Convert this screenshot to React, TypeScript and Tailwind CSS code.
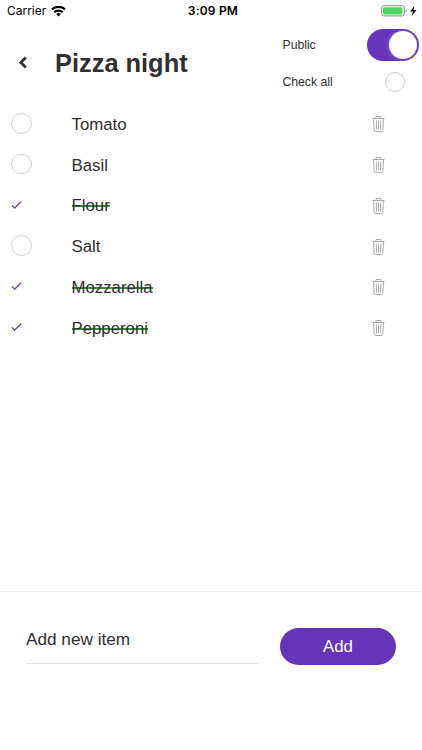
import React, { useState } from 'react';

type Item = {
    name: string;
    checked: boolean;
}

const initialItems: Item[] = [
    { name: 'Tomato', checked: false },
    { name: 'Basil', checked: false },
    { name: 'Flour', checked: true },
    { name: 'Salt', checked: false },
    { name: 'Mozzarella', checked: true },
    { name: 'Pepperoni', checked: true },
];

function StatusBar() {
    return (
        <div className="grid h-[22px] grid-cols-3 items-center pl-[7px] pr-[5px] font-['Inter',sans-serif] text-[12px] leading-[22px] text-black">
            <div className="flex items-center gap-[5px]">
                <span className="tracking-[-0.02px]">Carrier</span>
                <svg className="h-[11px] w-[15px]" viewBox="0 0 15 11" fill="none" stroke="#000" strokeWidth="2.2">
                    <path d="M.9 3.5a9.4 9.4 0 0 1 13.2 0" />
                    <path d="M3.3 6.3a6 6 0 0 1 8.4 0" />
                    <path d="M7.5 10.4 5.1 8.1a3.5 3.5 0 0 1 4.8 0z" fill="#000" stroke="none" />
                </svg>
            </div>
            <span className="pl-[2px] text-center font-semibold tracking-[0.2px]">3:09 PM</span>
            <div className="flex justify-end">
                <svg className="h-[12px] w-[36px]" viewBox="0 0 36 12">
                    <rect x=".6" y=".7" width="22.8" height="10.2" rx="2.2" fill="none" stroke="#8e8e8e" />
                    <rect x="2" y="2.2" width="19.4" height="7.2" rx=".8" fill="#4cd964" />
                    <path d="M24.6 4.2q1 .5 1 1.7t-1 1.7z" fill="#8e8e8e" />
                    <path d="M33.3 1 29.2 6.500h2.7l-1.2 4.5 4.8-5.9h-2.900z" fill="#000" />
                </svg>
            </div>
        </div>
    )
}

function TrashIcon() {
    return (
        <svg className="h-[17px] w-[13px]" viewBox="0 0 13 17" fill="none" stroke="#a9a9a9">
            <path d="M.5 3.500h12M4 3.500V1.500h5v2M1.500 3.500l.7 12q.1 1 1 1h6.600q.9 0 1-1l.7-12M4.300 5.500l.2 9M6.500 5.500v9M8.700 5.500l-.2 9" />
        </svg>
    )
}

function ListItem({ item, toggle, remove }: { item: Item; toggle(): void; remove(): void }) {
    return (
        <li className="flex h-[40.75px] items-center pl-[11px] pr-[37px]">
            <button onClick={toggle} aria-label={item.name} className="flex w-[60.5px] items-center">
                {item.checked ? (
                    <svg className="h-[10px] w-[11px]" viewBox="0 0 11 10" fill="none" stroke="#6534bb" strokeWidth="1.3">
                        <path d="M.9 5.4 3.7 8.1 10 1.7" />
                    </svg>
                ) : (
                    <span className="size-[20.5px] rounded-full border border-[#cfcfcf]"></span>
                )}
            </button>
            <div className="flex flex-1 pt-[3px] text-[16.8px] leading-5">
                <span className={item.checked ? 'bg-[linear-gradient(#388e3c,#388e3c)] bg-[length:100%_2px] bg-[position:0_9px] bg-no-repeat' : ''}>
                    {item.name}
                </span>
            </div>
            <button onClick={remove} aria-label="Delete" className="pt-px">
                <TrashIcon />
            </button>
        </li>
    )
}

export default function App() {

    const [items, setItems] = useState<Item[]>(initialItems);
    const [isPublic, setIsPublic] = useState(true);
    const [value, setValue] = useState('');

    const toggle = (index: number) => setItems(items.map((item, i) => i === index ? { ...item, checked: !item.checked } : item));
    const remove = (index: number) => setItems(items.filter((_, i) => i !== index));
    const checkAll = () => setItems(items.map((item) => ({ ...item, checked: true })));

    const addItem = () => {

        if(!value) return;

        setItems([...items, { name: value, checked: false }]);
        setValue('');
    }

  return (
    <div className="flex h-screen flex-col overflow-hidden bg-white font-['Liberation_Sans',Arial,sans-serif] text-[#2f2f2f]">
        <StatusBar />

        <header className="flex h-[81px] shrink-0">
            <button aria-label="Back" className="flex w-[55px] items-center pl-[18px]">
                <svg className="h-[13px] w-[10px]" viewBox="0 0 10 13" fill="none" stroke="#2f2f2f" strokeWidth="2.7">
                    <path d="M7.8 1.5 2.8 6.5 7.8 11.5" />
                </svg>
            </button>
            <h1 className="flex-1 pt-[25px] text-[25.4px] font-bold leading-[32px]">Pizza night</h1>
            <div className="flex w-[139.5px] flex-col pt-[7px] text-[12.2px]">
                <div className="flex h-[32px] items-center justify-between pr-[3px]">
                    <span>Public</span>
                    <button onClick={() => setIsPublic(!isPublic)} aria-label="Public" className={`flex h-[32px] w-[52px] items-center rounded-full p-[2px] ${isPublic ? 'justify-end bg-[#6534bb]' : 'bg-gray-300'}`}>
                        <span className="size-[28px] rounded-full bg-white shadow-[-1px_0_5px_rgba(255,255,255,0.2)]"></span>
                    </button>
                </div>
                <div className="mt-[5px] flex h-[32px] items-center justify-between pb-px pr-[17px]">
                    <span className="pt-[2px]">Check all</span>
                    <button onClick={checkAll} aria-label="Check all" className="mt-px size-[20px] rounded-full border border-[#cfcfcf]"></button>
                </div>
            </div>
        </header>

        <ul className="flex-1 overflow-hidden">
            {items.map((item, i) => (
                <ListItem key={i} item={item} toggle={() => toggle(i)} remove={() => remove(i)} />
            ))}
        </ul>

        <footer className="flex h-[159px] shrink-0 items-start justify-between border-t border-[#f0f0f0] px-[26px] pt-[36px]">
            <input
                value={value}
                onChange={(e) => setValue(e.target.value)}
                placeholder="Add new item"
                className="h-[36px] w-[231.5px] border-b border-[#dedede] pb-[13px] text-[17.2px] outline-none placeholder:text-[#2f2f2f] placeholder:opacity-100"
            />
            <button onClick={addItem} className="h-[37px] w-[116px] rounded-full bg-[#6534bb] text-[16.8px] text-white">Add</button>
        </footer>
    </div>
  )
}
